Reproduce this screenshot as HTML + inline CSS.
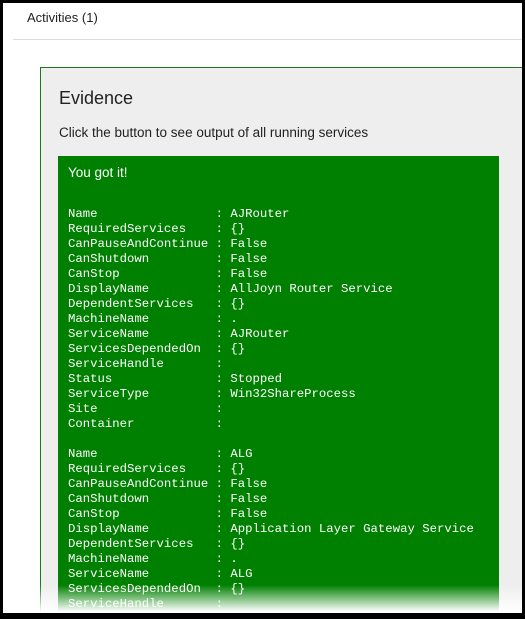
<!DOCTYPE html>
<html><head><style>
html,body{margin:0;padding:0;}
body{width:525px;height:619px;background:#000;position:relative;overflow:hidden;font-family:"Segoe UI","Liberation Sans",sans-serif;}
.page{position:absolute;left:3px;top:3px;width:519px;height:610px;background:#fff;overflow:hidden;}
.hdr{position:absolute;left:24px;top:7px;font-size:13px;color:#222;}
.line{position:absolute;left:10px;right:0;top:36px;height:1px;background:#ddd;}
.box{position:absolute;left:37px;top:64px;width:482px;height:546px;background:#eee;border-top:1px solid #1a7a1a;border-left:1px solid #1a7a1a;overflow:hidden;}
.ev{position:absolute;left:18px;top:20px;font-size:18px;color:#222;}
.desc{position:absolute;left:18px;top:57px;font-size:13.5px;color:#222;}
.panel{position:absolute;left:17px;top:88px;width:441px;height:458px;background:#008000;color:#fff;overflow:hidden;}
.got{position:absolute;left:10px;top:9px;font-size:13.5px;}
pre{position:absolute;left:10px;top:51px;margin:0;font-family:"Liberation Mono",monospace;font-size:12.3px;line-height:15px;color:#fff;}
.fade{position:absolute;left:0;right:0;top:582px;height:28px;background:linear-gradient(to bottom,rgba(255,255,255,0),#fff 95%);}
</style></head><body>
<div class="page">
<div class="hdr">Activities (1)</div>
<div class="line"></div>
<div class="box">
<div class="ev">Evidence</div>
<div class="desc">Click the button to see output of all running services</div>
<div class="panel">
<div class="got">You got it!</div>
<pre>Name                : AJRouter
RequiredServices    : {}
CanPauseAndContinue : False
CanShutdown         : False
CanStop             : False
DisplayName         : AllJoyn Router Service
DependentServices   : {}
MachineName         : .
ServiceName         : AJRouter
ServicesDependedOn  : {}
ServiceHandle       :
Status              : Stopped
ServiceType         : Win32ShareProcess
Site                :
Container           :

Name                : ALG
RequiredServices    : {}
CanPauseAndContinue : False
CanShutdown         : False
CanStop             : False
DisplayName         : Application Layer Gateway Service
DependentServices   : {}
MachineName         : .
ServiceName         : ALG
ServicesDependedOn  : {}
ServiceHandle       :</pre>
</div>
</div>
<div class="fade"></div>
</div>
</body></html>
